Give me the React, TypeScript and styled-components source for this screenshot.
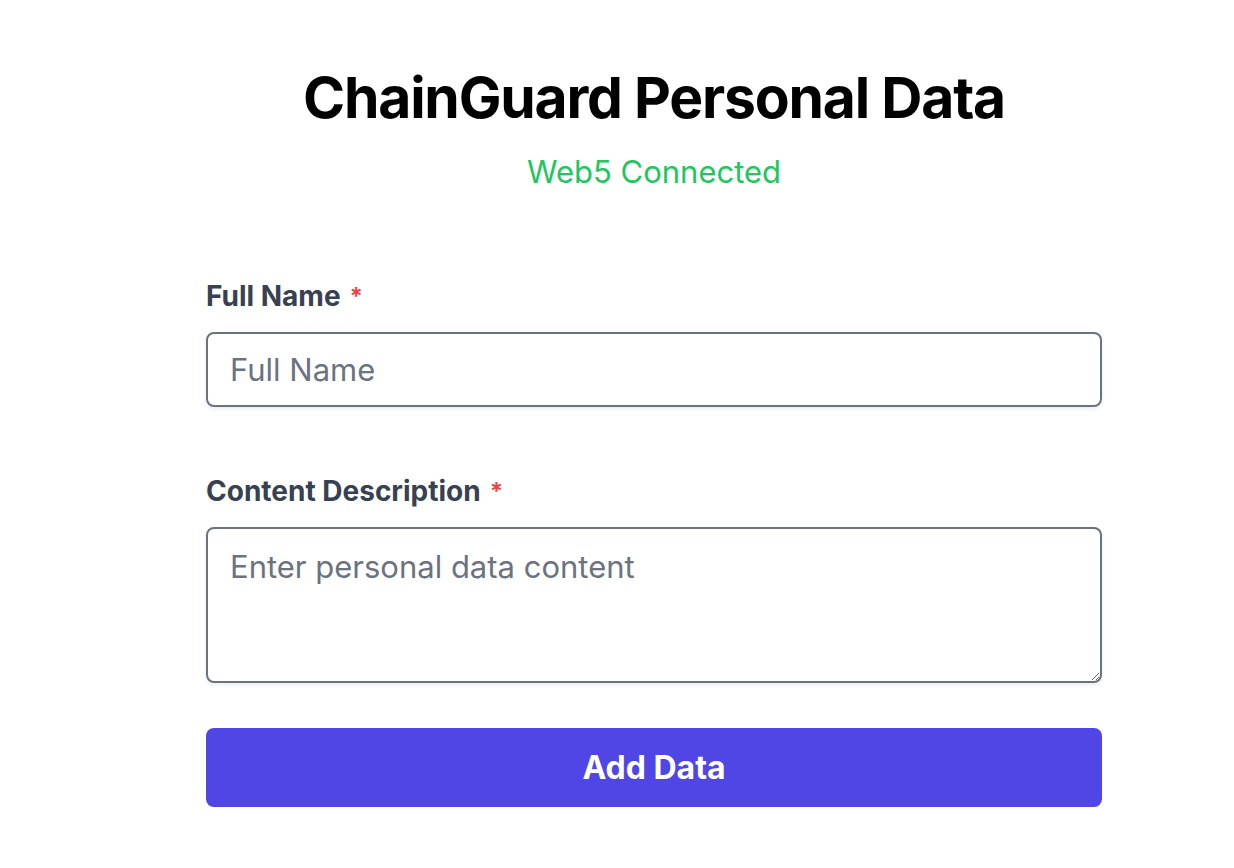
import React from "react";
import styled, { createGlobalStyle } from "styled-components";

const Global = createGlobalStyle`
  html, body { margin: 0; padding: 0; background: #ffffff; }
  body { font-family: Inter, "Liberation Sans", sans-serif; -webkit-font-smoothing: antialiased; }
  * { box-sizing: border-box; }
`;

const Page = styled.main`
  padding: 64px 0 40px 206px;
`;

const Card = styled.div`
  width: 896px;
  display: flex;
  flex-direction: column;
`;

const Header = styled.header`
  display: flex;
  flex-direction: column;
  align-items: center;
  margin-bottom: 90px;
`;

const Title = styled.h1`
  margin: 0;
  font-size: 57px;
  line-height: 68px;
  font-weight: 700;
  letter-spacing: -1.2px;
  color: #000000;
`;

const Status = styled.p`
  margin: 22px 0 0;
  font-size: 31px;
  line-height: 36px;
  font-weight: 400;
  color: #22c55e;
`;

const Form = styled.form`
  display: flex;
  flex-direction: column;
`;

const Field = styled.div<{ $gap: number }>`
  display: flex;
  flex-direction: column;
  margin-bottom: ${(p) => p.$gap}px;
`;

const Label = styled.label`
  height: 32px;
  font-size: 28px;
  line-height: 32px;
  font-weight: 700;
  color: #374151;
  margin-bottom: 20px;
`;

const Required = styled.span`
  color: #ef4444;
  margin-left: 9px;
  font-size: 24px;
  line-height: 0;
  vertical-align: 1px;
`;

const Input = styled.input`
  width: 100%;
  height: 75px;
  padding: 0 22px;
  font-family: inherit;
  font-size: 31px;
  color: #111827;
  border: 2px solid #6b7280;
  border-radius: 8px;
  box-shadow: 0 2px 4px rgba(0, 0, 0, 0.08);
  outline: none;
  &::placeholder { color: #6b7280; }
`;

const TextArea = styled.textarea`
  width: 100%;
  height: 156px;
  padding: 18px 22px;
  font-family: inherit;
  font-size: 31px;
  line-height: 40px;
  color: #111827;
  border: 2px solid #6b7280;
  border-radius: 8px;
  box-shadow: 0 2px 4px rgba(0, 0, 0, 0.08);
  outline: none;
  resize: vertical;
  &::placeholder { color: #6b7280; }
`;

const Button = styled.button`
  width: 100%;
  height: 79px;
  border: none;
  border-radius: 8px;
  background: #4f46e5;
  color: #ffffff;
  font-family: inherit;
  font-size: 32px;
  font-weight: 700;
  cursor: pointer;
`;

export default function App() {
  return (
    <>
      <Global />
      <Page>
        <Card>
          <Header>
            <Title>ChainGuard Personal Data</Title>
            <Status>Web5 Connected</Status>
          </Header>
          <Form onSubmit={(e) => e.preventDefault()}>
            <Field $gap={68}>
              <Label htmlFor="name">
                Full Name<Required>*</Required>
              </Label>
              <Input id="name" placeholder="Full Name" />
            </Field>
            <Field $gap={45}>
              <Label htmlFor="content">
                Content Description<Required>*</Required>
              </Label>
              <TextArea id="content" placeholder="Enter personal data content" />
            </Field>
            <Button type="submit">Add Data</Button>
          </Form>
        </Card>
      </Page>
    </>
  );
}
